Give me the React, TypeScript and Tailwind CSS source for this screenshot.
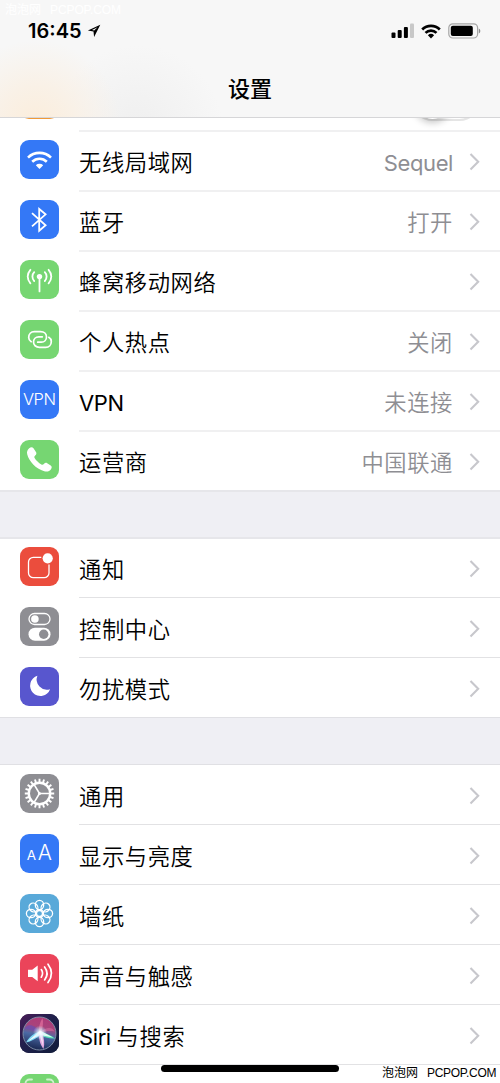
import React from 'react';

type IconName =
    | 'airplane' | 'wifi' | 'bluetooth' | 'cellular' | 'hotspot' | 'vpn' | 'phone'
    | 'notifications' | 'control' | 'moon' | 'gear' | 'display' | 'wallpaper'
    | 'sound' | 'siri' | 'faceid';

interface Item {
    icon: IconName;
    color: string;
    label?: string;
    value?: string;
}

const network: Item[] = [
    { icon: 'wifi', color: 'bg-[#3478f6]', label: '无线局域网', value: 'Sequel' },
    { icon: 'bluetooth', color: 'bg-[#3478f6]', label: '蓝牙', value: '打开' },
    { icon: 'cellular', color: 'bg-[#76d672]', label: '蜂窝移动网络' },
    { icon: 'hotspot', color: 'bg-[#76d672]', label: '个人热点', value: '关闭' },
    { icon: 'vpn', color: 'bg-[#3478f6]', label: 'VPN', value: '未连接' },
    { icon: 'phone', color: 'bg-[#76d672]', label: '运营商', value: '中国联通' },
];

const alerts: Item[] = [
    { icon: 'notifications', color: 'bg-[#eb4d3d]', label: '通知' },
    { icon: 'control', color: 'bg-[#8e8e93]', label: '控制中心' },
    { icon: 'moon', color: 'bg-[#5856ce]', label: '勿扰模式' },
];

const general: Item[] = [
    { icon: 'gear', color: 'bg-[#8e8e93]', label: '通用' },
    { icon: 'display', color: 'bg-[#3478f6]', label: '显示与亮度' },
    { icon: 'wallpaper', color: 'bg-[#59a9d9]', label: '墙纸' },
    { icon: 'sound', color: 'bg-[#eb445a]', label: '声音与触感' },
    { icon: 'siri', color: 'bg-[#1b1838]', label: 'Siri 与搜索' },
];

const teeth = Array.from({ length: 20 }, (_, i) => i * 18);
const petals = Array.from({ length: 8 }, (_, i) => i * 45);

const Glyph: React.FC<{ name: IconName }> = ({ name }) => {
    switch (name) {
        case 'wifi':
            return (
                <g fill="none" stroke="#fff" strokeWidth="2.6">
                    <path d="M8 17.6a16.4 16.4 0 0 1 23 0" />
                    <path d="M12.2 21.8a10.4 10.4 0 0 1 14.6 0" />
                    <path d="M15.8 25.3a5.4 5.4 0 0 1 7.4 0L19.5 29z" fill="#fff" stroke="none" />
                </g>
            );
        case 'bluetooth':
            return <path d="M12 13.2 25.6 25.3 19.2 30.8V9l6.4 5.3L12 26.4" fill="none" stroke="#fff" strokeWidth="1.8" />;
        case 'cellular':
            return (
                <g fill="none" stroke="#fff" strokeWidth="1.8" strokeLinecap="round">
                    <circle cx="19.5" cy="16.6" r="2.7" fill="#fff" stroke="none" />
                    <path d="M19.5 17v14.4" />
                    <path d="M14.2 12.2a6.3 6.3 0 0 0 0 8.8M24.8 12.2a6.3 6.3 0 0 1 0 8.8" />
                    <path d="M10.4 9.8c-3.6 4-3.6 9.6 0 13.6M28.6 9.8c3.6 4 3.6 9.6 0 13.6" />
                </g>
            );
        case 'hotspot':
            return (
                <g fill="none" stroke="#fff" strokeWidth="1.7" strokeLinecap="round">
                    <path d="M11.2 21.7C9.5 20.7 8.7 19.2 8.7 17.5c0-3.3 2.3-5.8 5.6-5.8h6.2c3.7 0 6 2.4 6 5.2 0 3-2.3 5.3-5.2 5.3h-3.6" />
                    <path d="M28.8 17.3c1.7 1 2.5 2.5 2.5 4.2 0 3.3-2.3 5.8-5.6 5.8h-6.2c-3.7 0-6-2.4-6-5.2 0-3 2.3-5.3 5.2-5.3h3.6" />
                </g>
            );
        case 'vpn':
            return <text x="19.3" y="25.3" textAnchor="middle" fontSize="16.5" fontFamily="Inter, sans-serif" fontWeight="350" letterSpacing="-0.4" fill="#fff">VPN</text>;
        case 'phone':
            return <path d="M9.2 8.2c1.4-1.3 3.3-1.4 4.3 0l2.6 4c.6 1.1.2 2.3-.7 3.1-1 .9-1.3 1.7-.8 2.7 1.6 2.6 4 4.9 6.8 6.5 1 .5 1.8.2 2.7-.8.9-1 2-1.2 3.1-.5l3.5 2.4c1.3.9 1.3 2.3.3 3.6-1.5 2.1-3.9 2.9-6.8 2C15.8 28.8 9 21.3 7.2 14.2c-.6-2.4.2-4.3 2-6z" fill="#fff" />;
        case 'notifications':
            return (
                <g>
                    <path d="M21.3 10.3H13.3a4.8 4.8 0 0 0-4.8 4.8v10.8a4.8 4.8 0 0 0 4.8 4.8h10.9a4.8 4.8 0 0 0 4.8-4.8v-8.4" fill="none" stroke="#fff" strokeWidth="1.3" />
                    <circle cx="27.7" cy="11.3" r="5.1" fill="#fff" />
                </g>
            );
        case 'control':
            return (
                <g>
                    <rect x="9" y="6.5" width="21" height="11" rx="5.5" fill="none" stroke="#fff" strokeWidth="1.3" />
                    <circle cx="14.9" cy="12" r="3.8" fill="#fff" />
                    <rect x="8.5" y="20.7" width="22" height="13" rx="6.5" fill="#fff" />
                    <circle cx="23.7" cy="27.2" r="4.7" fill="#8e8e93" />
                </g>
            );
        case 'moon':
            return <path d="M17.4 8.8a10.3 10.3 0 1 0 12.7 13.4A10.2 10.2 0 0 1 17.4 8.8z" fill="#fff" />;
        case 'gear':
            return (
                <g fill="none" stroke="#fff">
                    {teeth.map((a) => (
                        <path key={a} d="M19.5 4.8v4.2" strokeWidth="1.9" transform={`rotate(${a} 19.5 19.5)`} />
                    ))}
                    <circle cx="19.5" cy="19.5" r="10.7" strokeWidth="2.4" />
                    <path d="M19.5 19.5h10.5M19.5 19.5l-5.5-9.2M19.5 19.5l-5.5 9.2" strokeWidth="1.6" />
                    <circle cx="19.5" cy="19.5" r="1.5" fill="#fff" stroke="none" />
                </g>
            );
        case 'display':
            return (
                <g fill="#fff" fontFamily="Inter, sans-serif" textAnchor="middle">
                    <text x="11.4" y="25.6" fontSize="13.5" fontWeight="400">A</text>
                    <text x="24.7" y="25.9" fontSize="21" fontWeight="350">A</text>
                </g>
            );
        case 'wallpaper':
            return (
                <g fill="none" stroke="#fff" strokeWidth="1.3">
                    {petals.map((a) => (
                        <ellipse key={a} cx="19.5" cy="11" rx="4.2" ry="4.6" transform={`rotate(${a} 19.5 19.5)`} />
                    ))}
                    <circle cx="19.5" cy="19.5" r="3" />
                </g>
            );
        case 'sound':
            return (
                <g fill="none" stroke="#fff" strokeWidth="1.7" strokeLinecap="round">
                    <path d="M8 15.8h4.2l5.5-4.3v15.7l-5.5-4.3H8z" fill="#fff" stroke="none" />
                    <path d="M21.3 15.6c1.7 2.5 1.7 5.1 0 7.6M24.6 12.9c3.2 4.2 3.2 8.8 0 13M28 10.2c4.4 5.8 4.4 12.6 0 18.4" />
                </g>
            );
        case 'siri':
            return (
                <g>
                    <defs>
                        <linearGradient id="siri-bg" x1="0" y1="0" x2="1" y2="1">
                            <stop offset="0" stopColor="#4a1c58" />
                            <stop offset="0.45" stopColor="#20204c" />
                            <stop offset="1" stopColor="#101c3a" />
                        </linearGradient>
                        <linearGradient id="siri-orb" x1="0.6" y1="0" x2="0.4" y2="1">
                            <stop offset="0" stopColor="#b03a78" />
                            <stop offset="0.3" stopColor="#a8447c" />
                            <stop offset="0.55" stopColor="#4b6aa5" />
                            <stop offset="1" stopColor="#182650" />
                        </linearGradient>
                        <radialGradient id="siri-glow">
                            <stop offset="0" stopColor="#fff" stopOpacity="1" />
                            <stop offset="0.35" stopColor="#e8f6ff" stopOpacity="0.7" />
                            <stop offset="1" stopColor="#bfefff" stopOpacity="0" />
                        </radialGradient>
                    </defs>
                    <rect width="39" height="39" fill="url(#siri-bg)" />
                    <circle cx="19.5" cy="19.5" r="16.5" fill="url(#siri-orb)" stroke="#8394aa" strokeWidth="0.9" />
                    <path d="M20 18.5C14 9 7 10 4.5 15c5 0 9 2 15.5 3.5z" fill="#6d4bb2" opacity="0.7" />
                    <path d="M20 18.5C26 13 32 12.5 34.5 17.5c-5-1-9 0-14.5 1z" fill="#d56a9c" opacity="0.6" />
                    <path d="M20 17.5C26 19 31 21.500 35 24.500c-5 .5-11-1.5-15-3z" fill="#56e0b5" />
                    <path d="M20 17.5C14 19 9 23 6 28.500c5-1 10-4 14-7z" fill="#7fd9f5" />
                    <path d="M18.500 18.500c.5 7 1.500 12 5 16.500 1.500-6 .5-11-1.500-16.500z" fill="#e0a8de" />
                    <path d="M21 19C23 13 23.500 8 22.500 4c-3 5-4 10-3.500 15z" fill="#f07aa5" opacity="0.6" />
                    <path d="M7.500 27.500 20 16.500 33 23.500 20 21z" fill="#fff" opacity="0.85" />
                    <path d="M19 19 23 32l-.7-13z" fill="#fff" opacity="0.7" />
                    <circle cx="20" cy="18.5" r="7" fill="url(#siri-glow)" />
                </g>
            );
        case 'faceid':
            return (
                <path d="M5.5 12V9.500a4 4 0 0 1 4-4H12M27 5.500h2.500a4 4 0 0 1 4 4V12" fill="none" stroke="#fff" strokeOpacity="0.65" strokeWidth="1.8" strokeLinecap="round" />
            );
        default:
            return null;
    }
};

const AppIcon: React.FC<{ name: IconName; color: string }> = ({ name, color }) => (
    <div className={`mt-[9px] ml-5 size-[39px] shrink-0 overflow-hidden rounded-[9px] ${color}`}>
        <svg viewBox="0 0 39 39" className="block size-full">
            <Glyph name={name} />
        </svg>
    </div>
);

// Latin runs keep the regular weight and a tighter tracking than the Chinese text
const Label: React.FC<{ text: string }> = ({ text }) => {
    const latin = text.match(/^[A-Za-z]+ ?/)?.[0] ?? '';
    return (
        <>
            {latin && <span className="text-[22px] font-normal tracking-[-0.4px] whitespace-pre">{latin}</span>}
            {text.slice(latin.length)}
        </>
    );
};

const Row: React.FC<{ item: Item; last?: boolean; soft?: boolean }> = ({ item, last, soft }) => (
    <div className="flex h-[60px] items-start">
        <AppIcon name={item.icon} color={item.color} />
        <div className={`ml-5 flex flex-1 items-center pr-5 ${soft ? 'h-[61px] border-b-2' : 'h-[60px] border-b'} ${last ? 'border-transparent' : soft ? 'border-[#f0f0f1]' : 'border-[#e2e2e4]'}`}>
            <span className="flex-1 pt-[5px] text-[22.3px] leading-8 font-[350] tracking-[0.6px] text-black">
                <Label text={item.label ?? ''} />
            </span>
            {item.value && (
                <span className="mr-4 pt-[5px] text-[22.3px] leading-8 font-[350] tracking-[0.6px] text-[#8e8e93]">
                    <Label text={item.value} />
                </span>
            )}
            <svg viewBox="0 0 11 18" className="mt-[2px] h-[18px] w-[11px]">
                <path d="M1.5 1 9.2 8.7l-7.7 7.7" fill="none" stroke="#c7c7cc" strokeWidth="2.1" />
            </svg>
        </div>
    </div>
);

const Group: React.FC<{ items: Item[]; soft?: boolean }> = ({ items, soft }) => (
    <div className="bg-white">
        {items.map((item, i) => (
            <Row key={item.icon} item={item} soft={soft} last={i === items.length - 1} />
        ))}
    </div>
);

const StatusBar = () => (
    <div className="flex h-[62px] items-center pr-[19px] pl-[28px]">
        <span className="text-[20px] leading-6 font-semibold tracking-[0px]">16:45</span>
        <svg viewBox="0 0 14 14" className="ml-[5px] h-[14px] w-[14px]">
            <path d="M13.3.7.9 6.6l5.6.8.6 5.7z" />
            <path d="M10.5 3.3 5 6l2.2.4z" fill="#f7f7f7" />
        </svg>
        <div className="flex-1"></div>
        <svg viewBox="0 0 24 16" className="h-4 w-6">
            <rect x="0.5" y="9.5" width="4" height="5.5" rx="1" />
            <rect x="6.7" y="7" width="4" height="8" rx="1" />
            <rect x="12.9" y="4" width="4" height="11" rx="1" />
            <rect x="19" y="0.5" width="4" height="14.5" rx="1" fill="#c8c8c8" />
        </svg>
        <svg viewBox="0 0 20 15" className="ml-[6px] h-[15px] w-5">
            <path d="M1.2 5.5a12.6 12.6 0 0 1 17.6 0M4.5 8.9a7.9 7.9 0 0 1 11 0" fill="none" stroke="#000" strokeWidth="2.7" />
            <path d="M6.9 11.2a4.5 4.5 0 0 1 6.2 0L10 14.5z" />
        </svg>
        <svg viewBox="0 0 33 16" className="ml-[7px] h-4 w-[33px]">
            <rect x="0.8" y="0.8" width="28.8" height="14.2" rx="4" fill="none" stroke="#a6a6a6" strokeWidth="1.2" />
            <rect x="2.8" y="2.8" width="22" height="10.2" rx="2" />
            <path d="M30.8 5.5c2 .7 2 4.2 0 5z" fill="#8c8c8c" />
        </svg>
    </div>
);

const App: React.FC = () => {
    return (
        <div className="relative h-[1083px] w-[500px] overflow-hidden bg-white font-[Inter,'Noto_Sans_CJK_SC',sans-serif] text-black">
            <header className="relative z-10 h-[118px] border-b border-[#d6d6d8] bg-[#f7f7f7] bg-[radial-gradient(circle_at_36px_125px,#fbeddb_0px,#f9f1e7_40px,transparent_85px),radial-gradient(circle_at_138px_130px,#efefef_0px,transparent_85px)]">
                <StatusBar />
                <h1 className="pt-[11px] text-center text-[22px] leading-8 font-medium">设置</h1>
                <span className="absolute top-[2px] left-[5px] text-[12px] leading-4 whitespace-pre text-white">
                    泡泡网<span className="ml-[9px] font-['Liberation_Sans'] tracking-[-0.1px]">PCPOP.COM</span>
                </span>
            </header>

            <div className="-mt-[47px] flex h-[61px]">
                <AppIcon name="airplane" color="bg-[#f19a37]" />
                <div className="ml-5 flex flex-1 items-start justify-end border-b-2 border-[#f0f0f1] pt-[9px] pr-5">
                    <div className="h-[41px] w-[68px] rounded-full border-2 border-[#e5e5e5]">
                        <div className="size-[37px] rounded-full bg-white shadow-[0_4px_7px_rgba(0,0,0,0.22)]"></div>
                    </div>
                </div>
            </div>
            <div className="-mt-px">
                <Group items={network} soft />
            </div>
            <div className="relative -mt-px -mb-px h-[49px] border-y-2 border-[#e6e6ea] bg-[#efeff4]"></div>
            <Group items={alerts} />
            <div className="-mt-px h-12 border-y border-[#e0e0e4] bg-[#efeff4]"></div>
            <Group items={general} />
            <div className="-mt-px ml-[79px] border-t border-[#e2e2e4]"></div>
            <AppIcon name="faceid" color="bg-[#76d672]" />

            <div className="absolute top-[1065px] left-[161px] z-20 h-[7px] w-[178px] rounded-full bg-black"></div>
            <span className="absolute top-[1065px] left-[382px] z-20 text-[12px] leading-4 whitespace-pre">
                泡泡网<span className="ml-[9px] font-['Liberation_Sans'] tracking-[-0.3px]">PCPOP.COM</span>
            </span>
        </div>
    );
};

export default App;
